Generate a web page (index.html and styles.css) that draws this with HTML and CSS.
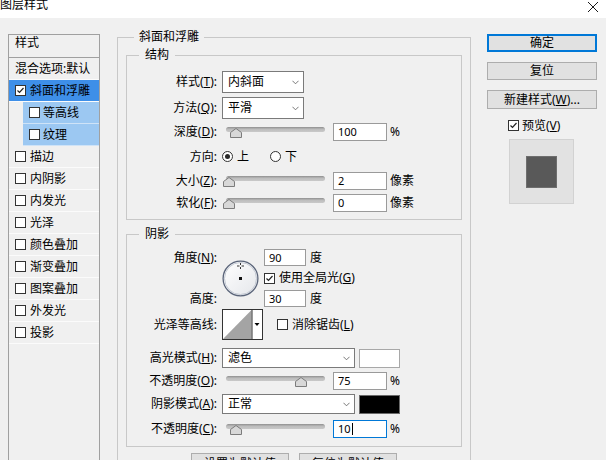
FILE: index.html
```html
<!DOCTYPE html>
<html lang="zh-CN">
<head>
<meta charset="utf-8">
<title>图层样式</title>
<link rel="stylesheet" href="styles.css">
</head>
<body>
<div class="titlebar">
  <span class="title">图层样式</span>
  <svg class="close" viewBox="0 0 12 12"><path d="M1 1L11 11M11 1L1 11"/></svg>
</div>
<div class="main">
  <div class="stylelist">
    <div class="list-head">样式</div>
    <div class="item">混合选项:默认</div>
    <div class="item sel"><span class="cb"><svg viewBox="0 0 9 9"><polyline points="1.5,4.5 3.5,6.5 7.5,2"/></svg></span>斜面和浮雕</div>
    <div class="item sub"><span class="cb"></span>等高线</div>
    <div class="item sub"><span class="cb"></span>纹理</div>
    <div class="item"><span class="cb"></span>描边</div>
    <div class="item"><span class="cb"></span>内阴影</div>
    <div class="item"><span class="cb"></span>内发光</div>
    <div class="item"><span class="cb"></span>光泽</div>
    <div class="item"><span class="cb"></span>颜色叠加</div>
    <div class="item"><span class="cb"></span>渐变叠加</div>
    <div class="item"><span class="cb"></span>图案叠加</div>
    <div class="item"><span class="cb"></span>外发光</div>
    <div class="item"><span class="cb"></span>投影</div>
  </div>

  <fieldset class="group outer">
    <legend class="legend-outer">斜面和浮雕</legend>

    <fieldset class="group inner structure">
      <legend class="legend-inner">结构</legend>
      <div class="row h22">
        <div class="lbl">样式(<u>T</u>):</div>
        <div class="select w82"><span>内斜面</span><svg class="chev" viewBox="0 0 8 5"><polyline points="0.5,0.5 4,4 7.5,0.5"/></svg></div>
      </div>
      <div class="row h22 mt4">
        <div class="lbl">方法(<u>Q</u>):</div>
        <div class="select w82"><span>平滑</span><svg class="chev" viewBox="0 0 8 5"><polyline points="0.5,0.5 4,4 7.5,0.5"/></svg></div>
      </div>
      <div class="row h18 mt4">
        <div class="lbl">深度(<u>D</u>):</div>
        <div class="slider"><div class="track"></div><svg class="thumb" style="left:4px" viewBox="0 0 12 10"><polygon points="0.5,9.5 0.5,4.5 6,0.5 11.5,4.5 11.5,9.5"/></svg></div>
        <div class="field">100</div><span class="unit">%</span>
      </div>
      <div class="row h31">
        <div class="lbl">方向:</div>
        <span class="radio on"></span><span class="opt">上</span>
        <span class="radio gap-radio"></span><span class="opt">下</span>
      </div>
      <div class="row h18">
        <div class="lbl">大小(<u>Z</u>):</div>
        <div class="slider"><div class="track"></div><svg class="thumb" style="left:-3px" viewBox="0 0 12 10"><polygon points="0.5,9.5 0.5,4.5 6,0.5 11.5,4.5 11.5,9.5"/></svg></div>
        <div class="field">2</div><span class="unit">像素</span>
      </div>
      <div class="row h18 mt4">
        <div class="lbl">软化(<u>F</u>):</div>
        <div class="slider"><div class="track"></div><svg class="thumb" style="left:-3px" viewBox="0 0 12 10"><polygon points="0.5,9.5 0.5,4.5 6,0.5 11.5,4.5 11.5,9.5"/></svg></div>
        <div class="field">0</div><span class="unit">像素</span>
      </div>
    </fieldset>

    <fieldset class="group inner shadow">
      <legend class="legend-inner">阴影</legend>
      <div class="angle">
        <div class="lbl a-l1">角度(<u>N</u>):</div>
        <svg class="dial" viewBox="0 0 37 37">
          <defs>
            <linearGradient id="dialfill" x1="0" y1="0" x2="1" y2="1">
              <stop offset="0" stop-color="#ffffff"/>
              <stop offset="1" stop-color="#e4e6ea"/>
            </linearGradient>
          </defs>
          <circle cx="18.5" cy="18.5" r="17.4" fill="url(#dialfill)" stroke="#5a6479" stroke-width="1.3"/>
          <circle cx="18.5" cy="18.5" r="16" fill="none" stroke="#c3c9d3" stroke-width="1"/>
          <rect x="17" y="17" width="3" height="3" fill="#111"/>
          <path d="M18.5 3V5M18.5 7V9M15 6H17.5M19.5 6H22" stroke="#333" stroke-width="1"/>
        </svg>
        <div class="ctl a-c1"><div class="field w42 h17">90</div><span class="unit">度</span></div>
        <div class="ctl a-c2"><span class="cb"><svg viewBox="0 0 9 9"><polyline points="1.5,4.5 3.5,6.5 7.5,2"/></svg></span><span class="cb-text">使用全局光(<u>G</u>)</span></div>
        <div class="lbl a-l3">高度:</div>
        <div class="ctl a-c3"><div class="field w42 h17">30</div><span class="unit">度</span></div>
      </div>
      <div class="row h31 mt2">
        <div class="lbl">光泽等高线:</div>
        <svg class="contour" viewBox="0 0 41 31">
          <rect x="0.5" y="0.5" width="40" height="30" fill="#fff" stroke="#333"/>
          <polygon points="1,30 29.5,1 29.5,30" fill="#a4a4a4"/>
          <line x1="30" y1="0" x2="30" y2="31" stroke="#333"/>
          <polygon points="32.5,14 37.5,14 35,17" fill="#000"/>
        </svg>
        <span class="cb cb-aa"></span><span class="cb-text">消除锯齿(<u>L</u>)</span>
      </div>
      <div class="row h20 mt8">
        <div class="lbl">高光模式(<u>H</u>):</div>
        <div class="select w133"><span>滤色</span><svg class="chev" viewBox="0 0 8 5"><polyline points="0.5,0.5 4,4 7.5,0.5"/></svg></div>
        <div class="colorbox white"></div>
      </div>
      <div class="row h18 mt4">
        <div class="lbl">不透明度(<u>O</u>):</div>
        <div class="slider"><div class="track"></div><svg class="thumb" style="left:69px" viewBox="0 0 12 10"><polygon points="0.5,9.5 0.5,4.5 6,0.5 11.5,4.5 11.5,9.5"/></svg></div>
        <div class="field">75</div><span class="unit">%</span>
      </div>
      <div class="row h20 mt4">
        <div class="lbl">阴影模式(<u>A</u>):</div>
        <div class="select w133"><span>正常</span><svg class="chev" viewBox="0 0 8 5"><polyline points="0.5,0.5 4,4 7.5,0.5"/></svg></div>
        <div class="colorbox black"></div>
      </div>
      <div class="row h18 mt6">
        <div class="lbl">不透明度(<u>C</u>):</div>
        <div class="slider"><div class="track"></div><svg class="thumb" style="left:4px" viewBox="0 0 12 10"><polygon points="0.5,9.5 0.5,4.5 6,0.5 11.5,4.5 11.5,9.5"/></svg></div>
        <div class="field focus">10<span class="caret"></span></div><span class="unit">%</span>
      </div>
    </fieldset>

    <div class="defaults">
      <div class="btn wide">设置为默认值</div>
      <div class="btn wide">复位为默认值</div>
    </div>
  </fieldset>

  <div class="side">
    <div class="btn default">确定</div>
    <div class="btn mt10">复位</div>
    <div class="btn mt10 h19">新建样式(<u>W</u>)...</div>
    <div class="preview-check"><span class="cb"><svg viewBox="0 0 9 9"><polyline points="1.5,4.5 3.5,6.5 7.5,2"/></svg></span><span class="cb-text">预览(<u>V</u>)</span></div>
    <div class="preview"><div class="preview-swatch"></div></div>
  </div>
</div>
</body>
</html>
```

FILE: styles.css
```css
* { box-sizing: border-box; }
html, body { margin: 0; padding: 0; }
body {
  width: 606px;
  height: 460px;
  overflow: hidden;
  background: #f0f0f0;
  color: #000;
  font-family: "Noto Sans", "Noto Sans CJK SC", sans-serif;
  font-size: 12px;
  line-height: 16px;
}
u { text-decoration: underline; text-underline-offset: 1px; }

/* title bar */
.titlebar {
  height: 18px;
  background: #fff;
  display: flex;
  justify-content: space-between;
  align-items: flex-start;
}
.title { line-height: 9px; font-size: 12px; white-space: nowrap; }
.close { width: 12px; height: 12px; margin: 1px 7px 0 0; stroke: #1a1a1a; stroke-width: 1; fill: none; }

.main {
  display: flex;
  align-items: flex-start;
  padding: 11px 0 0 8px;
}

/* left style list */
.stylelist {
  flex: none;
  width: 92px;
  height: 440px;
  margin-top: 5px;
  border: 1px solid #a0a0a0;
}
.list-head {
  height: 23px;
  border-bottom: 1px solid #a0a0a0;
  padding: 0 0 0 6px;
  line-height: 16px;
}
.item {
  height: 22px;
  border-bottom: 1px solid #fbfbfb;
  display: flex;
  align-items: center;
  gap: 4px;
  padding-left: 6px;
  white-space: nowrap;
}
.item.sel { background: #3e8fe8; }
.item.sub { margin-left: 14px; padding-left: 6px; gap: 3px; background: #9cc8f2; border-bottom-color: #cfe3f7; }

/* checkbox & radio */
.cb {
  flex: none;
  width: 11px;
  height: 11px;
  border: 1px solid #333;
  background: #fff;
  display: inline-flex;
  align-items: center;
  justify-content: center;
}
.cb svg { width: 9px; height: 9px; fill: none; stroke: #222; stroke-width: 1.2; }
.cb-text { margin-left: 4px; white-space: nowrap; }
.radio {
  flex: none;
  width: 11px;
  height: 11px;
  border: 1px solid #333;
  border-radius: 50%;
  background: #fff;
  display: inline-flex;
  align-items: center;
  justify-content: center;
}
.radio.on::after { content: ""; width: 5px; height: 5px; border-radius: 50%; background: #2a2a2a; }
.opt { margin-left: 4px; }
.gap-radio { margin-left: 21px; }

/* group boxes */
fieldset.group {
  margin: 0;
  border: 1px solid #c8c8c8;
  min-width: 0;
}
fieldset.outer {
  flex: none;
  width: 354px;
  margin-left: 17px;
  padding: 2px 8px 0 8px;
}
.legend-outer { padding: 0 5px; margin-left: 8px; line-height: 16px; }
.legend-inner { padding: 0 6px; margin-left: 12px; line-height: 16px; }
fieldset.inner { width: 336px; }
fieldset.structure { padding: 8px 0 7px 0; }
fieldset.shadow { margin-top: 6px; padding: 7px 0 8px 0; }

/* rows */
.row { display: flex; align-items: center; white-space: nowrap; }
.h17 { height: 17px; }
.h18 { height: 18px; }
.h20 { height: 20px; }
.h22 { height: 22px; }
.h31 { height: 31px; }
.mt2 { margin-top: 2px; }
.mt4 { margin-top: 4px; }
.mt6 { margin-top: 6px; }
.mt8 { margin-top: 8px; }
.mt10 { margin-top: 10px; }
.lbl {
  flex: none;
  width: 90px;
  margin-right: 5px;
  text-align: right;
  white-space: nowrap;
}

/* select */
.select {
  flex: none;
  height: 100%;
  display: flex;
  align-items: center;
  justify-content: space-between;
  background: #fff;
  border: 1px solid #7a7a7a;
  padding: 0 4px 0 5px;
}
.w82 { width: 82px; }
.w133 { width: 133px; }
.chev { width: 7px; height: 5px; fill: none; stroke: #666; stroke-width: 1; }

/* slider */
.slider { position: relative; flex: none; width: 99px; height: 18px; margin-left: 4px; }
.track {
  margin-top: 4px;
  height: 5px;
  border-radius: 3px;
  background: linear-gradient(#8f8f8f, #bdbdbd 45%, #c9c9c9);
}
.thumb { position: absolute; top: 5px; width: 12px; height: 10px; fill: #d8d8d8; stroke: #7c7c7c; stroke-width: 1; }

/* numeric field */
.field {
  flex: none;
  width: 54px;
  height: 18px;
  margin-left: 8px;
  border: 1px solid #9a9a9a;
  background: #fff;
  padding-left: 4px;
  font-size: 11px;
  line-height: 16px;
  display: flex;
  align-items: center;
}
.field.focus { border-color: #0078d7; }
.caret { display: inline-block; width: 1px; height: 12px; background: #000; margin-left: 1px; }
.unit { margin-left: 3px; }
.field.w42 { width: 42px; margin-left: 0; }
.field.h17 { height: 17px; }

/* angle block */
.angle {
  display: grid;
  grid-template-columns: 95px 42px auto;
  grid-template-rows: 17px 24px 17px;
  align-items: center;
}
.angle .lbl { width: auto; margin: 0; padding-right: 5px; }
.a-l1 { grid-column: 1; grid-row: 1; }
.a-l3 { grid-column: 1; grid-row: 3; }
.dial { grid-column: 2; grid-row: 1 / 4; width: 37px; height: 37px; }
.ctl { display: flex; align-items: center; white-space: nowrap; }
.a-c1 { grid-column: 3; grid-row: 1; }
.a-c2 { grid-column: 3; grid-row: 2; }
.a-c3 { grid-column: 3; grid-row: 3; }
.a-c1 .unit, .a-c3 .unit { margin-left: 4px; }

.contour { flex: none; width: 41px; height: 31px; }
.cb.cb-aa { margin-left: 14px; }

.colorbox { flex: none; width: 41px; height: 19px; margin-left: 4px; border: 1px solid #a8a8a8; }
.colorbox.white { background: #fff; }
.colorbox.black { background: #000; border-color: #6a6a6a; }

/* buttons */
.btn {
  height: 18px;
  border: 1px solid #adadad;
  background: #e1e1e1;
  text-align: center;
  line-height: 16px;
  white-space: nowrap;
}
.btn.default { border: 2px solid #0078d7; line-height: 14px; }
.btn.h19 { height: 19px; line-height: 17px; }
.defaults { display: flex; justify-content: center; gap: 10px; margin-top: 6px; }
.btn.wide { width: 98px; height: 22px; line-height: 20px; }

/* right column */
.side {
  flex: none;
  width: 110px;
  margin: 5px 0 0 16px;
  display: flex;
  flex-direction: column;
}
.preview-check {
  display: flex;
  align-items: center;
  height: 11px;
  margin: 11px 0 0 21px;
}
.preview-check .cb-text { margin-left: 3px; }
.preview {
  width: 65px;
  height: 65px;
  margin: 8px 0 0 22px;
  background: #e2e2e2;
  border: 1px solid #d2d2d2;
  display: flex;
  align-items: center;
  justify-content: center;
}
.preview-swatch {
  width: 31px;
  height: 32px;
  background: #595959;
  border: 1px solid #6e6e6e;
}
```
